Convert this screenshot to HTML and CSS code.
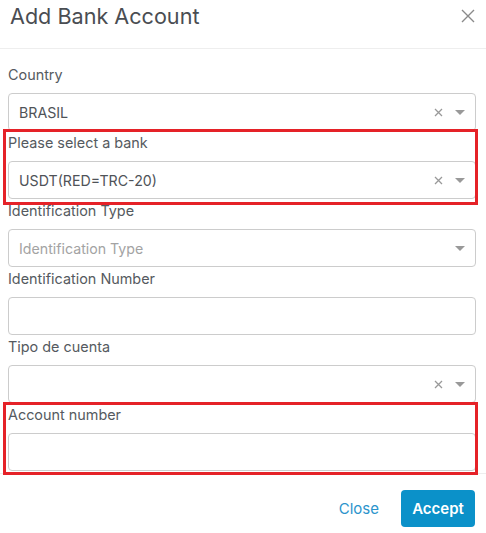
FILE: index.html
```html
<!DOCTYPE html>
<html>
<head>
<meta charset="utf-8">
<link rel="stylesheet" href="styles.css">
</head>
<body>
<div class="modal">
  <div class="modal-header">
    <h1 class="title">Add Bank Account</h1>
    <svg class="close-x" width="14" height="14" viewBox="0 0 14 14"><path d="M1 1L13 13M13 1L1 13" stroke="#8a8a8a" stroke-width="1.4" fill="none"/></svg>
  </div>
  <div class="modal-body">
    <div class="field">
      <label class="label">Country</label>
      <div class="control select">
        <span class="value">BRASIL</span>
        <span class="icons">
          <svg class="clear" width="9" height="9" viewBox="0 0 9 9"><path d="M1 1L8 8M8 1L1 8" stroke="#999" stroke-width="1.3" fill="none"/></svg>
          <svg class="arrow" width="10" height="5" viewBox="0 0 10 5"><path d="M0 0H10L5 5Z" fill="#999"/></svg>
        </span>
      </div>
    </div>
    <div class="field highlight hl-bank">
      <label class="label">Please select a bank</label>
      <div class="control select">
        <span class="value">USDT(RED=TRC-20)</span>
        <span class="icons">
          <svg class="clear" width="9" height="9" viewBox="0 0 9 9"><path d="M1 1L8 8M8 1L1 8" stroke="#999" stroke-width="1.3" fill="none"/></svg>
          <svg class="arrow" width="10" height="5" viewBox="0 0 10 5"><path d="M0 0H10L5 5Z" fill="#999"/></svg>
        </span>
      </div>
    </div>
    <div class="field">
      <label class="label">Identification Type</label>
      <div class="control select">
        <span class="value placeholder">Identification Type</span>
        <span class="icons">
          <svg class="arrow" width="10" height="5" viewBox="0 0 10 5"><path d="M0 0H10L5 5Z" fill="#999"/></svg>
        </span>
      </div>
    </div>
    <div class="field">
      <label class="label">Identification Number</label>
      <div class="control"></div>
    </div>
    <div class="field">
      <label class="label">Tipo de cuenta</label>
      <div class="control select">
        <span class="value"></span>
        <span class="icons">
          <svg class="clear" width="9" height="9" viewBox="0 0 9 9"><path d="M1 1L8 8M8 1L1 8" stroke="#999" stroke-width="1.3" fill="none"/></svg>
          <svg class="arrow" width="10" height="5" viewBox="0 0 10 5"><path d="M0 0H10L5 5Z" fill="#999"/></svg>
        </span>
      </div>
    </div>
    <div class="field highlight hl-account">
      <label class="label">Account number</label>
      <div class="control"></div>
    </div>
  </div>
  <div class="modal-footer">
    <button class="btn btn-link">Close</button>
    <button class="btn btn-primary">Accept</button>
  </div>
</div>
</body>
</html>
```

FILE: styles.css
```css
* { box-sizing: border-box; }
html, body { margin: 0; padding: 0; background: #fff; }
body { font-family: Inter, "Noto Sans", sans-serif; color: #555; }

.modal { width: 486px; }

.modal-header {
  height: 49px;
  border-bottom: 1px solid #eeeeee;
  display: flex;
  align-items: flex-start;
  justify-content: space-between;
  padding: 0 11px 0 10px;
}
.title {
  margin: 0;
  padding-top: 4px;
  font-size: 21.6px;
  line-height: 24px;
  font-weight: 400;
  color: #4a4d52;
}
.close-x { margin-top: 9px; }

.modal-body {
  padding: 14px 10px 2px 8px;
}

.field { position: relative; }
.label {
  display: block;
  font-size: 14.4px;
  line-height: 22px;
  padding-top: 1px;
  margin-bottom: 7px;
  color: #555a60;
}
.control {
  height: 38px;
  border: 1px solid #cccccc;
  border-radius: 4px;
  background: #fff;
  display: flex;
  align-items: center;
  padding: 0 10px 0 10px;
}
.select .value {
  flex: 1;
  font-size: 14.2px;
  color: #4f5358;
}
.select .placeholder { color: #a3a3a3; }
.icons {
  display: flex;
  align-items: center;
  gap: 12px;
}
.clear { display: block; }
.arrow { display: block; margin-top: 1px; }

.highlight::after {
  content: "";
  position: absolute;
  border: 3px solid #e52228;
  pointer-events: none;
}
.hl-bank::after { top: -2px; left: -5px; right: -2px; bottom: -6px; }
.hl-account::after { top: -1px; left: -5px; right: -2px; bottom: -4px; }

.modal-footer {
  border-top: 1px solid #eeeeee;
  display: flex;
  justify-content: flex-end;
  align-items: center;
  padding: 16px 11px 6px 0;
  gap: 10px;
}
.btn {
  font-family: Inter, "Noto Sans", sans-serif;
  font-size: 15px;
  height: 37px;
  border-radius: 4px;
  border: none;
  cursor: pointer;
}
.btn-link {
  background: none;
  color: #2b94cc;
  padding: 0 12px;
}
.btn-primary {
  background: #0b91c9;
  color: #fff;
  font-weight: 600;
  width: 74px;
  padding: 0;
}
```
